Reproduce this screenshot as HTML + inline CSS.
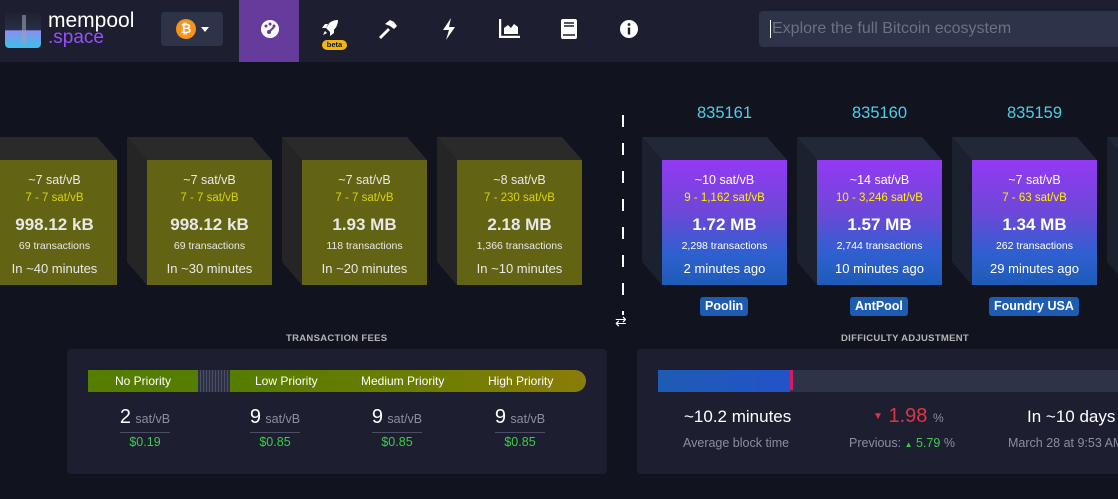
<!DOCTYPE html>
<html><head><meta charset="utf-8"><style>
*{margin:0;padding:0;box-sizing:border-box}
body{width:1118px;height:499px;overflow:hidden;background:#11131f;font-family:"Liberation Sans",sans-serif;color:#fff;position:relative}
.a{position:absolute}
.hdr{left:0;top:0;width:1118px;height:62px;background:#1d1f31}
.blk{position:absolute;top:137px;width:145px;height:148px}
.blk .top{position:absolute;left:0;top:0;width:145px;height:23px;background:#2b2a2b;clip-path:polygon(0 0,125px 0,145px 23px,20px 23px)}
.blk .side{position:absolute;left:0;top:0;width:20px;height:148px;background:#262526;clip-path:polygon(0 0,20px 23px,20px 148px,0 125px)}
.blk .front{position:absolute;left:20px;top:23px;width:125px;height:125px;background:#636413;text-align:center;color:#e8e8e8}
.m .top{background:#232838}.m .side{background:#1c2130}
.m .front{background:linear-gradient(#9339f4,#6f47d9 40%,#2f5fd0 75%,#1e5cb8);color:#fff}
.f1{position:absolute;left:0;right:0;top:13px;font-size:12.5px}
.f2{position:absolute;left:0;right:0;top:32px;font-size:11.5px;color:#d6d40b}
.m .f2{color:#fff000}
.f3{position:absolute;left:0;right:0;top:55px;font-size:17px;font-weight:bold}
.f4{position:absolute;left:0;right:0;top:80px;font-size:10.5px}
.f5{position:absolute;left:0;right:0;top:101px;font-size:13px}
.h{position:absolute;top:104px;color:#4ccfe6;font-size:16.5px;width:125px;text-align:center}
.pl{position:absolute;top:297px;background:#1e5cb3;border-radius:3px;font-size:12.5px;font-weight:bold;padding:2px 5px;height:19px}
.ttl{font-size:9.5px;font-weight:bold;color:#b4b4b4;letter-spacing:.3px}
.pan{background:#1d1f31;border-radius:4px}
.fv{position:absolute;top:406px;width:100px;text-align:center}
.fv .n{font-size:20px}.fv .u{font-size:12.5px;color:#8a8e9e}
.fv .ln{width:50px;height:1px;background:#4a4e62;margin:3px auto 2px}
.fv .d{color:#3bcc49;font-size:12.5px}
</style></head><body>
<div class="a hdr"></div>
<div class="a" style="left:5px;top:12px;width:36px;height:36px;border-radius:4px;background:linear-gradient(#1d2130 0,#2a2f45 50%,#8a8ff0 52%,#3bc0e8);"></div>
<div class="a" style="left:22px;top:15px;width:4px;height:28px;background:#9aa0b8;opacity:.6"></div>
<div class="a" style="left:48px;top:10px;font-size:21px;line-height:21px;color:#fff">mempool</div>
<div class="a" style="left:48px;top:28px;font-size:19px;line-height:19px;color:#9b4dff">.space</div>
<div class="a" style="left:161px;top:12px;width:62px;height:34px;background:#2d3348;border-radius:4px"></div>
<div class="a" style="left:176px;top:19px;width:20px;height:20px;border-radius:50%;background:#f7931a;color:#fff;font-size:13px;font-weight:bold;text-align:center;line-height:20px">₿</div>
<div class="a" style="left:201px;top:27px;width:0;height:0;border-left:4px solid transparent;border-right:4px solid transparent;border-top:5px solid #fff"></div>
<div class="a" style="left:239px;top:0;width:60px;height:62px;background:#653b9c"></div>
<svg class="a" style="left:260px;top:19px" width="20" height="20" viewBox="0 0 20 20"><circle cx="10" cy="10" r="9" fill="#fff"/><circle cx="6" cy="7" r="1.5" fill="#653b9c"/><circle cx="10" cy="5" r="1.5" fill="#653b9c"/><circle cx="14" cy="7" r="1.5" fill="#653b9c"/><path d="M9 13 L14 8" stroke="#653b9c" stroke-width="2"/><circle cx="9" cy="13" r="2" fill="#653b9c"/></svg>
<svg class="a" style="left:320px;top:18px" width="20" height="20" viewBox="0 0 20 20"><path d="M18 2 C12 2 8 5 6 10 L10 14 C15 12 18 8 18 2Z M6 10 L2 10 L5 6 L9 6Z M10 14 L10 18 L14 15 L14 11Z M5 13 L3 17 L7 15Z" fill="#fff"/></svg>
<div class="a" style="left:322px;top:40px;width:25px;height:10px;border-radius:5px;background:#f2b90c;color:#111;font-size:7.5px;font-weight:bold;text-align:center;line-height:10px">beta</div>
<svg class="a" style="left:377px;top:19px" width="22" height="20" viewBox="0 0 22 20"><path d="M2 18 L11 9 L13 11 L4 20Z" fill="#fff"/><path d="M8 5 L13 1 L17 3 L20 7 L17 10 L13 7Z" fill="#fff"/></svg>
<svg class="a" style="left:441px;top:18px" width="16" height="22" viewBox="0 0 16 22"><path d="M10 0 L2 12 L8 12 L5 22 L14 9 L8 9Z" fill="#fff"/></svg>
<svg class="a" style="left:499px;top:18px" width="22" height="20" viewBox="0 0 22 20"><path d="M1 1 V19 H21" stroke="#fff" stroke-width="2.5" fill="none"/><path d="M5 16 V10 L9 7 L12 10 L15 6 L19 9 V16Z" fill="#fff"/></svg>
<svg class="a" style="left:560px;top:18px" width="18" height="22" viewBox="0 0 18 22"><rect x="1" y="1" width="16" height="20" rx="2" fill="#fff"/><path d="M4 5 H14 M4 8 H14 M3 17 H15" stroke="#1d1f31" stroke-width="1.5"/></svg>
<svg class="a" style="left:619px;top:19px" width="20" height="20" viewBox="0 0 20 20"><circle cx="10" cy="10" r="9" fill="#fff"/><rect x="8.8" y="8.5" width="2.4" height="7" fill="#1d1f31"/><circle cx="10" cy="5.5" r="1.4" fill="#1d1f31"/></svg>
<div class="a" style="left:759px;top:11px;width:359px;height:36px;background:#2d3348;border-radius:4px 0 0 4px"></div>
<div class="a" style="left:770px;top:20px;font-size:16px;color:#6c7184;border-left:1px solid #fff;padding-left:1px;line-height:18px">Explore the full Bitcoin ecosystem</div>

<div class="blk" style="left:-28px"><div class="top"></div><div class="side"></div><div class="front"><div class="f1">~7 sat/vB</div><div class="f2">7 - 7 sat/vB</div><div class="f3">998.12 kB</div><div class="f4">69 transactions</div><div class="f5">In ~40 minutes</div></div></div>
<div class="blk" style="left:127px"><div class="top"></div><div class="side"></div><div class="front"><div class="f1">~7 sat/vB</div><div class="f2">7 - 7 sat/vB</div><div class="f3">998.12 kB</div><div class="f4">69 transactions</div><div class="f5">In ~30 minutes</div></div></div>
<div class="blk" style="left:282px"><div class="top"></div><div class="side"></div><div class="front"><div class="f1">~7 sat/vB</div><div class="f2">7 - 7 sat/vB</div><div class="f3">1.93 MB</div><div class="f4">118 transactions</div><div class="f5">In ~20 minutes</div></div></div>
<div class="blk" style="left:437px"><div class="top"></div><div class="side"></div><div class="front"><div class="f1">~8 sat/vB</div><div class="f2">7 - 230 sat/vB</div><div class="f3">2.18 MB</div><div class="f4">1,366 transactions</div><div class="f5">In ~10 minutes</div></div></div>

<div class="a" style="left:622px;top:115px;width:2px;height:200px;background:repeating-linear-gradient(#fff 0 12px,transparent 12px 28px)"></div>
<div class="a" style="left:615px;top:313px;font-size:14px;color:#fff">⇄</div>

<div class="h" style="left:662px">835161</div>
<div class="h" style="left:817px">835160</div>
<div class="h" style="left:972px">835159</div>
<div class="blk m" style="left:642px"><div class="top"></div><div class="side"></div><div class="front"><div class="f1">~10 sat/vB</div><div class="f2">9 - 1,162 sat/vB</div><div class="f3">1.72 MB</div><div class="f4">2,298 transactions</div><div class="f5">2 minutes ago</div></div></div>
<div class="blk m" style="left:797px"><div class="top"></div><div class="side"></div><div class="front"><div class="f1">~14 sat/vB</div><div class="f2">10 - 3,246 sat/vB</div><div class="f3">1.57 MB</div><div class="f4">2,744 transactions</div><div class="f5">10 minutes ago</div></div></div>
<div class="blk m" style="left:952px"><div class="top"></div><div class="side"></div><div class="front"><div class="f1">~7 sat/vB</div><div class="f2">7 - 63 sat/vB</div><div class="f3">1.34 MB</div><div class="f4">262 transactions</div><div class="f5">29 minutes ago</div></div></div>
<div class="blk m" style="left:1107px"><div class="top"></div><div class="side"></div></div>
<div class="pl" style="left:700px">Poolin</div>
<div class="pl" style="left:850px">AntPool</div>
<div class="pl" style="left:989px">Foundry USA</div>

<div class="a ttl" style="left:286px;top:333px">TRANSACTION FEES</div>
<div class="a ttl" style="left:841px;top:333px">DIFFICULTY ADJUSTMENT</div>
<div class="a pan" style="left:67px;top:349px;width:540px;height:125px"></div>
<div class="a pan" style="left:637px;top:349px;width:490px;height:125px"></div>

<div class="a" style="left:88px;top:370px;width:110px;height:22px;background:#557d00;font-size:12px;text-align:center;line-height:22px">No Priority</div>
<div class="a" style="left:198px;top:370px;width:32px;height:22px;background:repeating-linear-gradient(90deg,#2c3146 0 2px,#4a4f66 2px 3px)"></div>
<div class="a" style="left:230px;top:370px;width:356px;height:22px;border-radius:0 11px 11px 0;background:linear-gradient(90deg,#557d00,#6a7d00 50%,#8a7d0a);font-size:12px;line-height:22px"><span class="a" style="left:25px">Low Priority</span><span class="a" style="left:131px">Medium Priority</span><span class="a" style="left:258px">High Priority</span></div>

<div class="fv" style="left:95px"><span class="n">2</span> <span class="u">sat/vB</span><div class="ln"></div><div class="d">$0.19</div></div>
<div class="fv" style="left:225px"><span class="n">9</span> <span class="u">sat/vB</span><div class="ln"></div><div class="d">$0.85</div></div>
<div class="fv" style="left:347px"><span class="n">9</span> <span class="u">sat/vB</span><div class="ln"></div><div class="d">$0.85</div></div>
<div class="fv" style="left:470px"><span class="n">9</span> <span class="u">sat/vB</span><div class="ln"></div><div class="d">$0.85</div></div>

<div class="a" style="left:658px;top:370px;width:460px;height:22px;background:#2d3348"></div>
<div class="a" style="left:658px;top:370px;width:132px;height:22px;background:linear-gradient(90deg,#1e5cb3,#2253c9)"></div>
<div class="a" style="left:790px;top:370px;width:3px;height:20px;background:#d81b60"></div>
<div class="a" style="left:684px;top:407px;font-size:17px">~10.2 minutes</div>
<div class="a" style="left:683px;top:436px;font-size:12.5px;color:#8a8e9e">Average block time</div>
<div class="a" style="left:873px;top:405px;font-size:20px;color:#dc3545"><span style="font-size:10px;vertical-align:3px">▼</span> 1.98 <span style="font-size:12px;color:#8a8e9e">%</span></div>
<div class="a" style="left:849px;top:436px;font-size:12.5px;color:#8a8e9e">Previous: <span style="color:#3bcc49;font-size:8px">▲</span> <span style="color:#3bcc49">5.79</span> %</div>
<div class="a" style="left:1027px;top:407px;font-size:17px">In ~10 days</div>
<div class="a" style="left:1008px;top:436px;font-size:12.5px;color:#8a8e9e;white-space:nowrap">March 28 at 9:53 AM</div>
</body></html>
